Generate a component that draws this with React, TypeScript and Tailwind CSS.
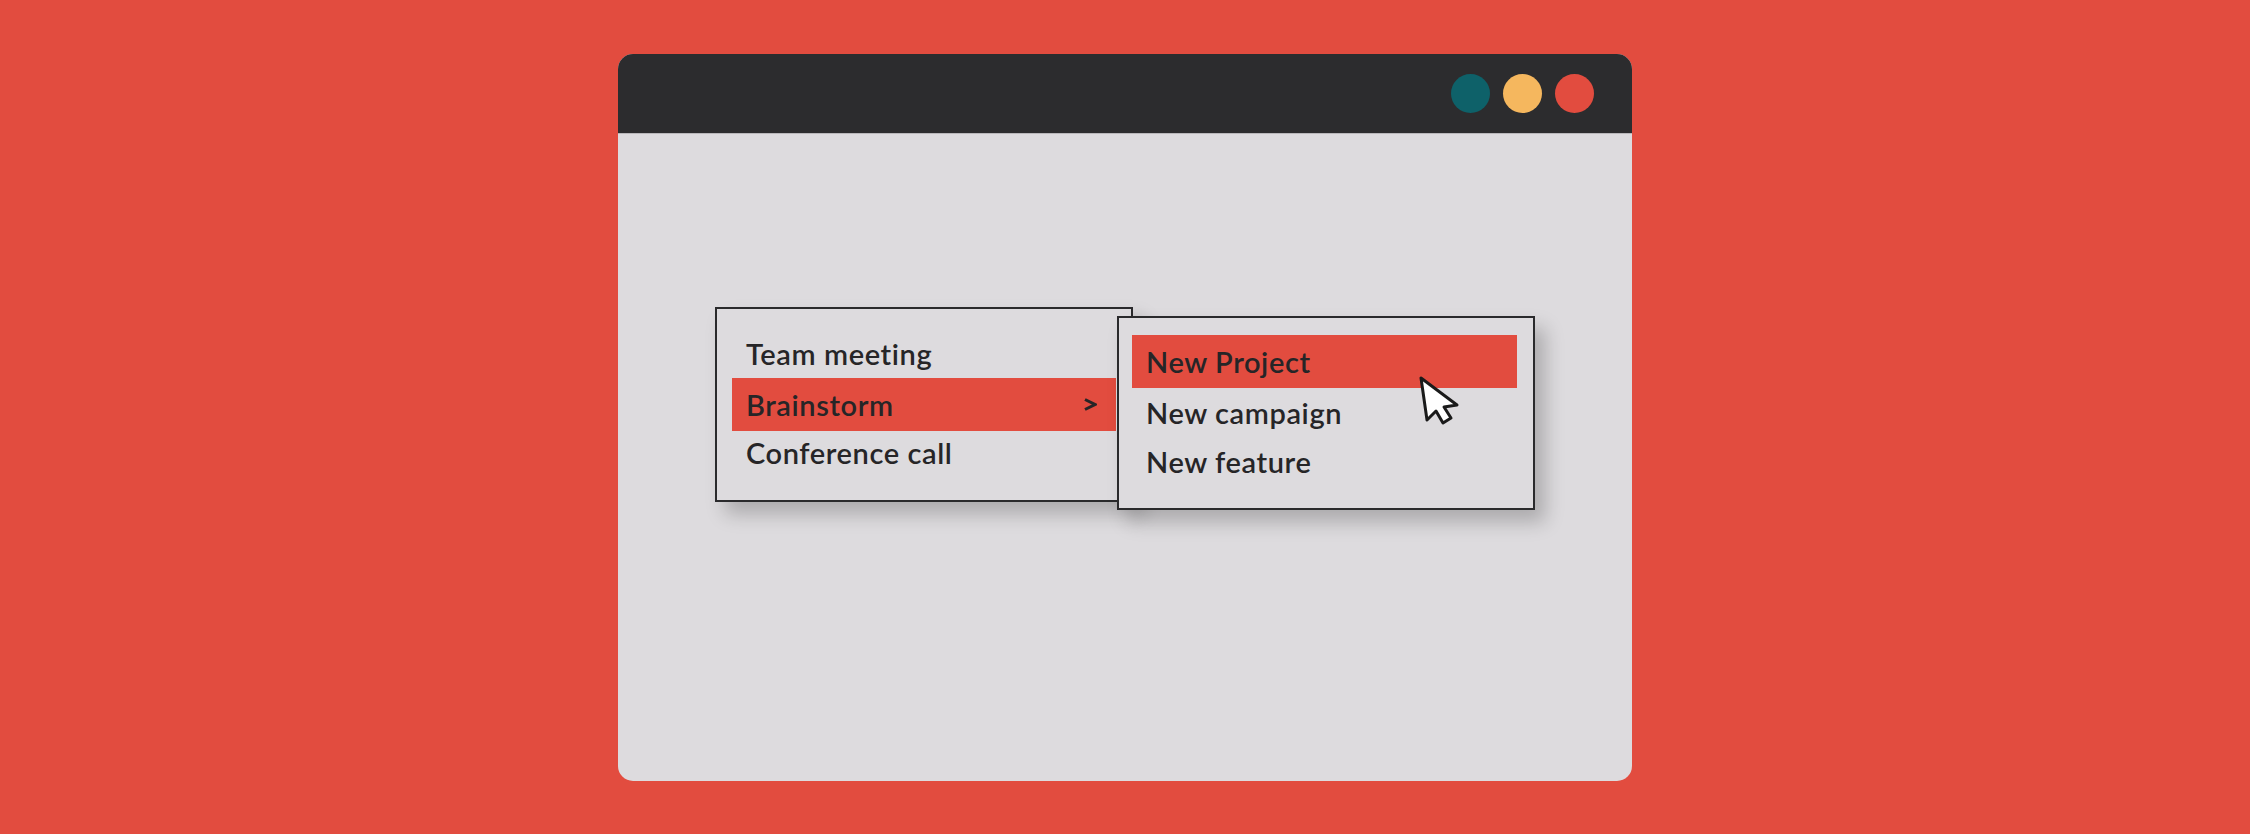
import React from "react";

const font = { fontFamily: "Lato, 'Open Sans', sans-serif" };

function Row({
  label,
  h,
  active,
  arrow,
}: {
  label: string;
  h: number;
  active?: boolean;
  arrow?: boolean;
}) {
  return (
    <div
      className={
        "flex items-center justify-between pl-[14px] pr-[19px] text-[29px] font-semibold tracking-[0.6px] text-[#262527] whitespace-nowrap " +
        (active ? "bg-[#e24c3f]" : "")
      }
      style={{ height: h, lineHeight: `${h}px` }}
    >
      <span>{label}</span>
      {arrow && (
        <svg width="14" height="13" viewBox="0 0 14 13" className="mt-[1px]">
          <path d="M2 1.5 L12 6.5 L2 11.5" fill="none" stroke="#262527" strokeWidth="3" strokeLinejoin="miter" />
        </svg>
      )}
    </div>
  );
}

export default function App() {
  return (
    <div className="w-[2250px] h-[834px] bg-[#e24c3f] flex items-center justify-center" style={font}>
      <div className="w-[1014px] h-[727px] rounded-[15px] overflow-hidden flex flex-col bg-[#dddbde]">
        <div className="h-[80px] bg-[#2c2c2e] flex items-center justify-end gap-[13px] pr-[38px] border-b border-[#b9b7ba]">
          <div className="w-[39px] h-[39px] rounded-full bg-[#0e6169]" />
          <div className="w-[39px] h-[39px] rounded-full bg-[#f5b75e]" />
          <div className="w-[39px] h-[39px] rounded-full bg-[#e24c3f]" />
        </div>
        <div className="flex-1 flex items-start pl-[97px] pt-[173px]">
          <div className="w-[418px] border-2 border-[#2a2a2c] bg-[#dddbde] pt-[21px] pb-[25px] pl-[15px] pr-[15px] shadow-[10px_12px_18px_rgba(0,0,0,0.22)]">
            <Row label="Team meeting" h={48} />
            <Row label="Brainstorm" h={53} active arrow />
            <Row label="Conference call" h={44} />
          </div>
          <div className="relative w-[418px] -ml-[16px] mt-[9px] border-2 border-[#2a2a2c] bg-[#dddbde] pt-[17px] pb-[22px] pl-[13px] pr-[16px] shadow-[10px_12px_18px_rgba(0,0,0,0.22)]">
            <Row label="New Project" h={53} active />
            <Row label="New campaign" h={50} />
            <Row label="New feature" h={48} />
            <svg
              className="absolute left-[299px] top-[57px]"
              width="44"
              height="52"
              viewBox="-3 -3 44 52"
            >
              <path
                d="M0 0 L6 42 L15 33 L22 45 L30 40 L23 29 L36 27 Z"
                fill="#ffffff"
                stroke="#1a1a1a"
                strokeWidth="3"
                strokeLinejoin="round"
              />
            </svg>
          </div>
        </div>
      </div>
    </div>
  );
}
